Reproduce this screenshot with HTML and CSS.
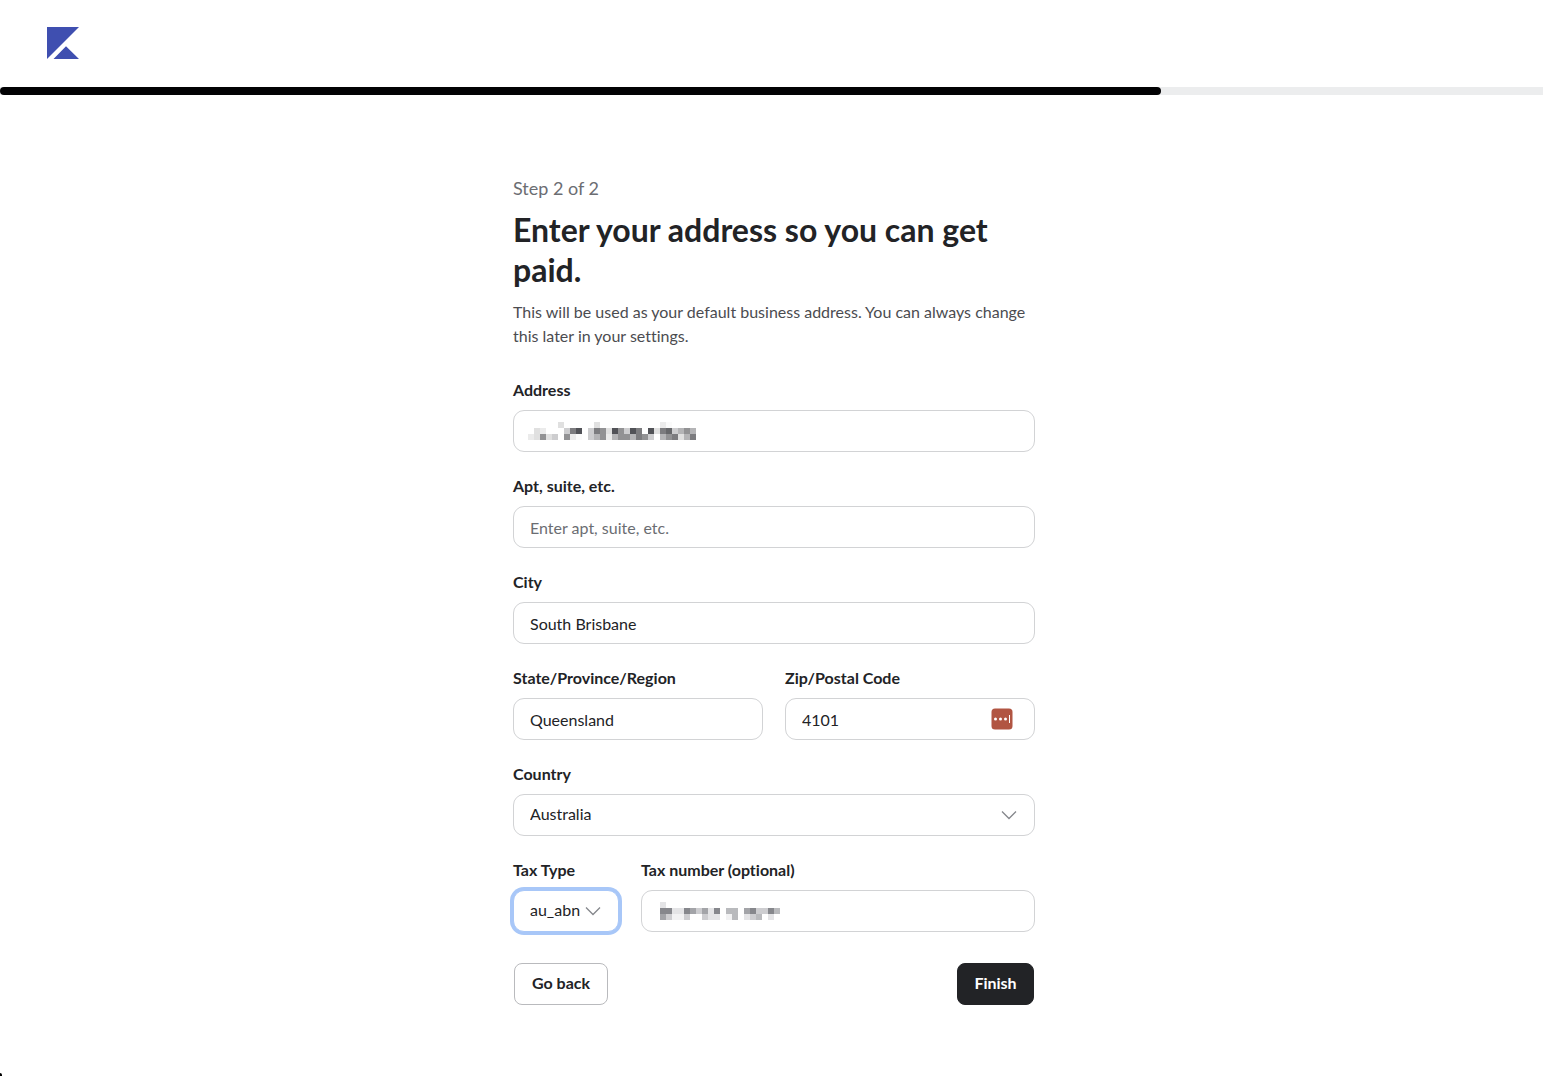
FILE: index.html
```html
<!DOCTYPE html>
<html lang="en">
<head>
<meta charset="utf-8">
<meta name="viewport" content="width=device-width, initial-scale=1">
<title>Enter your address</title>
<link rel="stylesheet" href="styles.css">
</head>
<body>
<header class="header">
  <a class="logo" href="#" aria-label="Home">
    <svg width="32" height="32" viewBox="0 0 32 32" fill="#3f4fb0"><path d="M0 0H32L0 32ZM6.500 32 19 19.300 32 32Z"/></svg>
  </a>
</header>
<div class="progress" role="progressbar" aria-label="Progress" aria-valuenow="75" aria-valuemin="0" aria-valuemax="100"><div class="progress-bar" style="width:75.25%"></div></div>
<main class="main">
  <form class="form">
    <p class="step">Step 2 of 2</p>
    <h1 class="title">Enter your address so you can get paid.</h1>
    <p class="intro">This will be used as your default business address. You can always change this later in your settings.</p>
    <div class="fields">
      <div class="field">
        <label for="address">Address</label>
        <div class="control">
          <input id="address" type="text">
          <svg class="redacted redacted-address" width="168" height="18" viewBox="0 0 28 3" shape-rendering="crispEdges" aria-hidden="true">
            <path fill="#e0e0e0" d="M5 0h1v1h-1zM11 0h1v1h-1zM1 1h1v1h-1zM13 1h1v1h-1zM21 1h1v1h-1zM1 2h1v1h-1zM3 2h1v1h-1zM25 2h1v1h-1z"/>
            <path fill="#ebebeb" d="M22 0h1v1h-1zM2 1h1v1h-1zM0 2h1v1h-1zM7 2h1v1h-1zM13 2h1v1h-1z"/>
            <path fill="#fafafa" d="M23 0h1v1h-1zM8 2h1v1h-1z"/>
            <path fill="#cdcdcf" d="M6 1h1v1h-1zM10 1h1v1h-1zM16 1h1v1h-1zM24 1h1v1h-1zM4 2h1v1h-1zM10 2h1v1h-1zM20 2h1v1h-1z"/>
            <path fill="#b4b4b6" d="M25 1h1v1h-1zM27 1h1v1h-1zM11 2h1v1h-1zM14 2h1v1h-1zM17 2h1v1h-1zM22 2h1v1h-1zM26 2h1v1h-1z"/>
            <path fill="#929294" d="M12 1h1v1h-1zM15 1h1v1h-1zM26 1h1v1h-1zM2 2h1v1h-1zM6 2h1v1h-1zM12 2h1v1h-1zM15 2h2v1h-2zM19 2h1v1h-1zM23 2h1v1h-1z"/>
            <path fill="#7c7c7f" d="M7 1h1v1h-1zM11 1h1v1h-1zM18 1h1v1h-1zM22 1h1v1h-1zM18 2h1v1h-1zM24 2h1v1h-1zM27 2h1v1h-1z"/>
            <path fill="#515257" d="M8 1h1v1h-1zM14 1h1v1h-1zM17 1h1v1h-1zM20 1h1v1h-1z"/>
            <path fill="#66676a" d="M23 1h1v1h-1z"/>
          </svg>
        </div>
      </div>
      <div class="field">
        <label for="apt">Apt, suite, etc.</label>
        <input id="apt" type="text" placeholder="Enter apt, suite, etc.">
      </div>
      <div class="field">
        <label for="city">City</label>
        <input id="city" type="text" value="South Brisbane">
      </div>
      <div class="row row-halves">
        <div class="field">
          <label for="state">State/Province/Region</label>
          <input id="state" type="text" value="Queensland">
        </div>
        <div class="field">
          <label for="zip">Zip/Postal Code</label>
          <div class="control">
            <input id="zip" type="text" value="4101">
            <svg class="autofill" width="22" height="22" viewBox="0 0 22 22" aria-hidden="true"><rect x=".5" y=".5" width="21" height="21" rx="3.500" fill="#b15542"/><g fill="#fff"><circle cx="4.500" cy="11" r="1.500"/><circle cx="9.500" cy="11" r="1.500"/><circle cx="14.500" cy="11" r="1.500"/><rect x="18" y="7" width="1" height="8"/></g></svg>
          </div>
        </div>
      </div>
      <div class="field">
        <label for="country">Country</label>
        <div class="control">
          <select id="country"><option>Australia</option></select>
          <svg class="chevron" width="16" height="10" viewBox="0 0 16 10" aria-hidden="true"><path d="M1 1.500 8 8.500 15 1.500" fill="none" stroke="#85878c" stroke-width="1.300"/></svg>
        </div>
      </div>
      <div class="row row-tax">
        <div class="field">
          <label for="tax-type">Tax Type</label>
          <div class="control">
            <select id="tax-type" class="is-focused"><option>au_abn</option></select>
            <svg class="chevron" width="16" height="10" viewBox="0 0 16 10" aria-hidden="true"><path d="M1 1.500 8 8.500 15 1.500" fill="none" stroke="#85878c" stroke-width="1.300"/></svg>
          </div>
        </div>
        <div class="field">
          <label for="tax-number">Tax number (optional)</label>
          <div class="control">
            <input id="tax-number" type="text">
            <svg class="redacted redacted-tax" width="120" height="18" viewBox="0 0 20 3" shape-rendering="crispEdges" aria-hidden="true">
              <path fill="#e4e4e6" d="M0 0h1v1h-1zM2 1h2v1h-2zM8 1h1v1h-1zM8 2h2v1h-2zM14 2h1v1h-1zM18 2h1v1h-1z"/>
              <path fill="#f2f2f3" d="M2 2h2v1h-2zM11 2h1v1h-1z"/>
              <path fill="#cdcdd0" d="M6 1h1v1h-1zM16 1h2v1h-2zM1 2h1v1h-1zM4 2h1v1h-1zM7 2h1v1h-1zM15 2h1v1h-1z"/>
              <path fill="#b9babd" d="M11 1h2v1h-2zM19 1h1v1h-1zM12 2h1v1h-1zM16 2h1v1h-1z"/>
              <path fill="#a3a4a8" d="M5 1h1v1h-1zM7 1h1v1h-1zM14 1h1v1h-1zM0 2h1v1h-1z"/>
              <path fill="#86878c" d="M0 1h2v1h-2zM4 1h1v1h-1zM9 1h1v1h-1zM15 1h1v1h-1zM18 1h1v1h-1z"/>
            </svg>
          </div>
        </div>
      </div>
    </div>
    <div class="actions">
      <button type="button" class="button">Go back</button>
      <button type="submit" class="button button-primary">Finish</button>
    </div>
  </form>
</main>
<div class="corner" aria-hidden="true"></div>
</body>
</html>
```
FILE: styles.css
```css
* { box-sizing: border-box; }
body {
  margin: 0;
  background: #fff;
  color: #222326;
  font-family: Lato, sans-serif;
  font-size: 16px;
  line-height: 24px;
  font-variant-ligatures: none;
}
.header { padding: 27px 47px 28px; }
.logo, .logo svg { display: block; width: 32px; }
.progress { height: 8px; background: #ecedee; }
.progress-bar { height: 8px; border-radius: 4px; background: #020204; }
.main { padding: 81px 0 71px 5px; }
.form { max-width: 522px; margin: 0 auto; }
.step { margin: 0; font-size: 18px; color: #6b6d72; }
.title {
  margin: 10px 0;
  font-size: 32px;
  line-height: 40px;
  font-weight: 700;
}
.intro { margin: 0 0 30px; color: #4b4c50; }
.fields { display: flex; flex-direction: column; gap: 22px; }
.field { display: flex; flex-direction: column; gap: 8px; min-width: 0; }
.field label { font-weight: 700; }
.row { display: grid; gap: 22px; }
.row-halves { grid-template-columns: 1fr 1fr; }
.row-tax { grid-template-columns: 106px 1fr; }
.control { position: relative; }
input, select {
  display: block;
  width: 100%;
  height: 42px;
  padding: 0 16px;
  border: 1px solid #d2d3d5;
  border-radius: 11px;
  background: #fff;
  color: #222326;
  font: inherit;
  outline: none;
}
select { appearance: none; padding-bottom: 2px; }
input::placeholder { color: #6b6d72; opacity: 1; }
.is-focused { border-color: #a8c7f8; box-shadow: 0 0 0 3px #a8c7f8; }
.redacted, .autofill, .chevron { position: absolute; pointer-events: none; }
.redacted { top: 12px; }
.redacted-address { left: 15px; }
.redacted-tax { left: 19px; }
.autofill { top: 10px; right: 22px; }
.chevron { top: 16px; right: 18px; }
.actions { display: flex; justify-content: space-between; margin-top: 31px; padding: 0 1px; }
.button {
  min-width: 94px;
  height: 42px;
  padding: 0 0 2px;
  border: 1px solid #b9babd;
  border-radius: 8px;
  background: #fff;
  color: #222326;
  font: inherit;
  font-weight: 700;
}
.button-primary { min-width: 77px; border-color: #222326; background: #222326; color: #fff; }
.corner { position: fixed; left: 0; bottom: 0; width: 2px; height: 3px; border-top-right-radius: 2px; background: #000; }
```
